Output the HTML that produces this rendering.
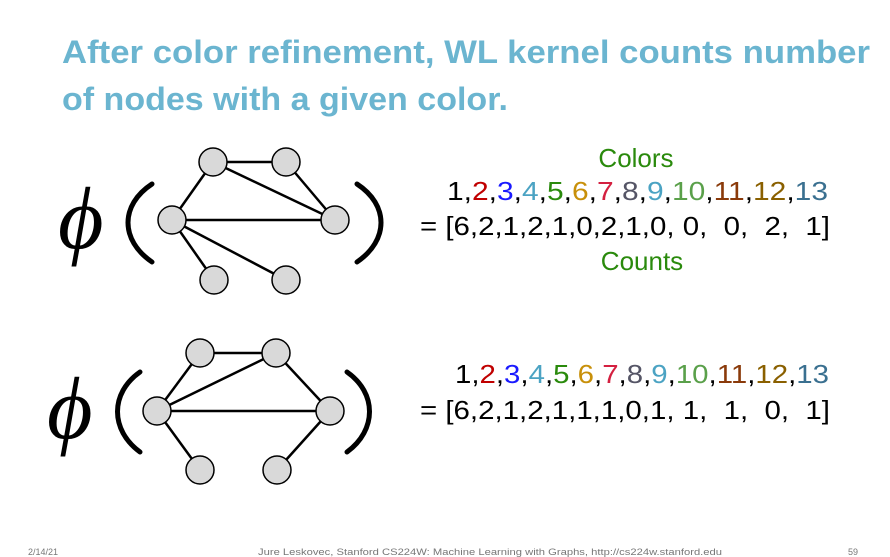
<!DOCTYPE html>
<html><head><meta charset="utf-8"><style>
html,body{margin:0;padding:0;background:#fff;width:890px;height:557px;overflow:hidden}
svg{display:block}
</style></head><body>
<svg width="890" height="557" xmlns="http://www.w3.org/2000/svg">
<g font-family="Liberation Sans, sans-serif" font-weight="bold" font-size="32" fill="#6bb5d0">
<text x="62" y="63" textLength="808" lengthAdjust="spacingAndGlyphs">After color refinement, WL kernel counts number</text>
<text x="62" y="110" textLength="446" lengthAdjust="spacingAndGlyphs">of nodes with a given color.</text>
</g>
<g font-family="Liberation Serif, serif" fill="#000">
<text x="58" y="248" font-size="88" font-style="italic">ϕ</text>
<text x="47" y="438" font-size="88" font-style="italic">ϕ</text>
</g>
<g fill="none" stroke="#000" stroke-width="5" stroke-linecap="round">
<path d="M152,184 C120,205 120,240 152,262"/>
<path d="M357,184 C389,205 389,240 357,262"/>
<path d="M140,372 C110,393 110,430 140,452"/>
<path d="M347,372 C377,393 377,430 347,452"/>
</g>
<g stroke="#000" stroke-width="2.5">
<line x1="213" y1="162" x2="286" y2="162"/><line x1="213" y1="162" x2="172" y2="220"/>
<line x1="213" y1="162" x2="335" y2="220"/><line x1="286" y1="162" x2="335" y2="220"/>
<line x1="172" y1="220" x2="335" y2="220"/><line x1="172" y1="220" x2="214" y2="280"/>
<line x1="172" y1="220" x2="286" y2="280"/>
<line x1="200" y1="353" x2="276" y2="353"/><line x1="200" y1="353" x2="157" y2="411"/>
<line x1="157" y1="411" x2="276" y2="353"/><line x1="276" y1="353" x2="330" y2="411"/>
<line x1="157" y1="411" x2="330" y2="411"/><line x1="157" y1="411" x2="200" y2="470"/>
<line x1="330" y1="411" x2="277" y2="470"/>
</g>
<g fill="#d9d9d9" stroke="#000" stroke-width="1.5">
<circle cx="213" cy="162" r="14"/><circle cx="286" cy="162" r="14"/><circle cx="172" cy="220" r="14"/>
<circle cx="335" cy="220" r="14"/><circle cx="214" cy="280" r="14"/><circle cx="286" cy="280" r="14"/>
<circle cx="200" cy="353" r="14"/><circle cx="276" cy="353" r="14"/><circle cx="157" cy="411" r="14"/>
<circle cx="330" cy="411" r="14"/><circle cx="200" cy="470" r="14"/><circle cx="277" cy="470" r="14"/>
</g>
<g font-family="Liberation Sans, sans-serif" font-size="26">
<text x="636" y="167" text-anchor="middle" fill="#2a8a0c">Colors</text>
<text x="447" y="200" textLength="381" lengthAdjust="spacingAndGlyphs"><tspan fill="#000">1,</tspan><tspan fill="#c00000">2</tspan><tspan fill="#000">,</tspan><tspan fill="#1a1aff">3</tspan><tspan fill="#000">,</tspan><tspan fill="#4ba3c3">4</tspan><tspan fill="#000">,</tspan><tspan fill="#2a8a0c">5</tspan><tspan fill="#000">,</tspan><tspan fill="#c8900a">6</tspan><tspan fill="#000">,</tspan><tspan fill="#d42040">7</tspan><tspan fill="#000">,</tspan><tspan fill="#555566">8</tspan><tspan fill="#000">,</tspan><tspan fill="#4ba3c3">9</tspan><tspan fill="#000">,</tspan><tspan fill="#5aa04a">10</tspan><tspan fill="#000">,</tspan><tspan fill="#8a3a0a">11</tspan><tspan fill="#000">,</tspan><tspan fill="#8a6000">12</tspan><tspan fill="#000">,</tspan><tspan fill="#3a7090">13</tspan></text>
<text x="420" y="235" fill="#000" textLength="410" lengthAdjust="spacingAndGlyphs" xml:space="preserve">= [6,2,1,2,1,0,2,1,0, 0,  0,  2,  1]</text>
<text x="642" y="270" text-anchor="middle" fill="#2a8a0c">Counts</text>
<text x="455" y="383" textLength="374" lengthAdjust="spacingAndGlyphs"><tspan fill="#000">1,</tspan><tspan fill="#c00000">2</tspan><tspan fill="#000">,</tspan><tspan fill="#1a1aff">3</tspan><tspan fill="#000">,</tspan><tspan fill="#4ba3c3">4</tspan><tspan fill="#000">,</tspan><tspan fill="#2a8a0c">5</tspan><tspan fill="#000">,</tspan><tspan fill="#c8900a">6</tspan><tspan fill="#000">,</tspan><tspan fill="#d42040">7</tspan><tspan fill="#000">,</tspan><tspan fill="#555566">8</tspan><tspan fill="#000">,</tspan><tspan fill="#4ba3c3">9</tspan><tspan fill="#000">,</tspan><tspan fill="#5aa04a">10</tspan><tspan fill="#000">,</tspan><tspan fill="#8a3a0a">11</tspan><tspan fill="#000">,</tspan><tspan fill="#8a6000">12</tspan><tspan fill="#000">,</tspan><tspan fill="#3a7090">13</tspan></text>
<text x="420" y="419" fill="#000" textLength="410" lengthAdjust="spacingAndGlyphs" xml:space="preserve">= [6,2,1,2,1,1,1,0,1, 1,  1,  0,  1]</text>
</g>
<g font-family="Liberation Sans, sans-serif" font-size="9" fill="#777">
<text x="28" y="555">2/14/21</text>
<text x="258" y="555" textLength="464" lengthAdjust="spacingAndGlyphs">Jure Leskovec, Stanford CS224W: Machine Learning with Graphs, http://cs224w.stanford.edu</text>
<text x="848" y="555">59</text>
</g>
</svg>
</body></html>
